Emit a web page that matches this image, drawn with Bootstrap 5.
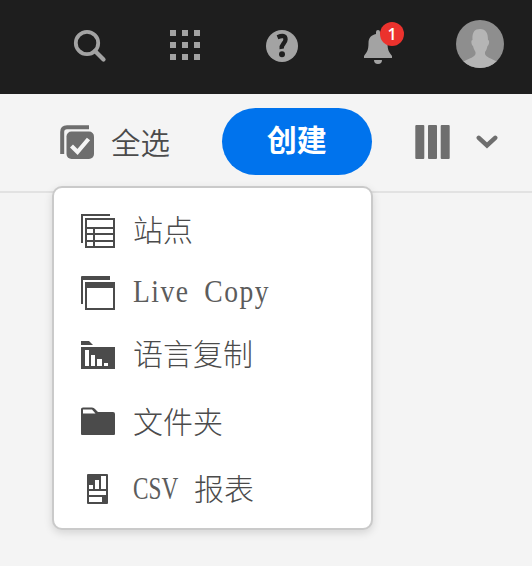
<!DOCTYPE html>
<html lang="zh-CN">
<head>
<meta charset="utf-8">
<meta name="viewport" content="width=device-width, initial-scale=1">
<title>创建</title>
<link href="https://cdn.jsdelivr.net/npm/bootstrap@5.3.0/dist/css/bootstrap.min.css" rel="stylesheet">
<style>
body{background:#f4f4f4;font-family:"Noto Sans CJK SC",sans-serif;height:566px;overflow:hidden;color:#4b4b4b}
svg{display:block;flex:none}
.topbar{height:94px;background:#1e1e1e;padding:0 28px 0 73px}
.icon-search{margin-top:29px}
.icon-apps{margin:30px 0 0 63px}
.icon-help{margin:30px 0 0 66px}
.alerts{margin:29px 0 0 66px}
.avatar{margin-top:20px}
.alert-count{position:absolute;left:16px;top:-7px;width:24px;height:24px;background:#eb322d;font:600 16px/24px "Open Sans",sans-serif}
.toolbar{height:99px;border-bottom:2px solid #e2e2e2;padding:0 34px 2px 60px}
.select-all{font-size:29.5px;line-height:40px;font-weight:350;margin:-2px 0 0 17px;width:110.5px}
.btn-create{width:150.5px;height:67px;background:#0073ed;font-size:30px;line-height:1;font-weight:700;color:#fff;padding:0 0 7px}
.btn-create:hover{background:#0069d9;color:#fff}
.icon-columns{margin-left:43px}
.create-menu{display:block;position:absolute;left:52px;top:186px;width:321px;height:344px;border:2px solid #cacaca;border-radius:10px;padding:12px 0 0;box-shadow:0 3px 9px rgba(0,0,0,.13);background:#fff}
.create-menu .dropdown-item{height:62px;padding:0 0 0 26px;font-size:30px;line-height:44px;color:#4b4b4b;font-weight:300}
.create-menu .tall{height:67.5px}
.create-menu svg{width:36px;height:36px;margin-right:17px}
.create-menu .tall svg{margin-top:3px}
.label-cjk{margin-top:-6px}
.tall .label-cjk{margin-top:0}
.latin{font-family:"Liberation Serif",serif;font-weight:400;font-size:31px;color:#5c5c5c;display:inline-block;transform-origin:0 50%;white-space:pre;margin-top:-2px}
.latin-wide{letter-spacing:1.7px;word-spacing:7px;transform:scaleX(.89)}
.latin-narrow{transform:scaleX(.75);width:61px;margin-top:4px}
</style>
</head>
<body>
<nav class="topbar d-flex align-items-start">
<svg class="icon-search" width="34" height="34" viewBox="0 0 34 34"><g fill="none" stroke="#a3a3a3"><circle cx="14" cy="14" r="11.200" stroke-width="3.800"/><path d="M22 22l8.500 8.500" stroke-width="4.200" stroke-linecap="round"/></g></svg>
<svg class="icon-apps" width="30" height="30" viewBox="0 0 30 30" fill="#a3a3a3"><path d="M0 0h6v6H0zM12 0h6v6h-6zM24 0h6v6h-6zM0 12h6v6H0zM12 12h6v6h-6zM24 12h6v6h-6zM0 24h6v6H0zM12 24h6v6h-6zM24 24h6v6h-6z"/></svg>
<svg class="icon-help" width="32" height="32" viewBox="0 0 32 32"><circle cx="16" cy="16" r="16" fill="#a3a3a3"/><path d="M11.500 7.200Q19.500 4 19.500 9.400c0 4-4.600 4.600-3.800 9.400" fill="none" stroke="#1e1e1e" stroke-width="4.400"/><circle cx="16" cy="24.200" r="3" fill="#1e1e1e"/></svg>
<div class="alerts position-relative">
<svg width="28" height="36" viewBox="0 0 28 36" fill="#a3a3a3"><path d="M12 5V3q0-2 2-2t2 2v2c5 1 7.500 4 7.500 9 0 7 1.500 9 4.500 13v2H0v-2c3-4 4.500-6 4.500-13 0-5 2.500-8 7.500-9zM10 31h8q0 4-4 4t-4-4z"/></svg>
<span class="alert-count rounded-circle text-white text-center">1</span>
</div>
<svg class="avatar ms-auto" width="48" height="48" viewBox="0 0 48 48"><defs><clipPath id="face"><circle cx="24" cy="24" r="24"/></clipPath></defs><g clip-path="url(#face)"><path fill="#8e8e8e" d="M0 0h48v48H0z"/><path fill="#b5b5b5" d="M24 9c-6 0-8 4-7.500 11-2 0-1 6 .5 6 .6 3 2 5 2.500 6v2c-1 3-5 4-13.500 8v8h36v-8c-8-4-12-5-13-8v-2c1-1 1.900-3 2.500-6 1.500 0 2.500-6 .5-6C32 13 30 9 24 9z"/></g></svg>
</nav>
<div class="toolbar d-flex align-items-center">
<svg width="34" height="34" viewBox="0 0 34 34"><path d="M2.200 29V7Q2.200 2.200 7 2.200H29" fill="none" stroke="#6e6e6e" stroke-width="4"/><rect x="6.500" y="6.500" width="27.500" height="27.500" rx="5" fill="#6e6e6e"/><path d="M11.500 21l6 6L28.500 14" fill="none" stroke="#f4f4f4" stroke-width="4.200"/></svg>
<span class="select-all text-nowrap">全选</span>
<button class="btn btn-create rounded-pill border-0" type="button">创建</button>
<svg class="icon-columns" width="36" height="34" viewBox="0 0 36 34" fill="#6e6e6e"><rect x=".3" width="9" height="34" rx="1"/><rect x="13" width="9" height="34" rx="1"/><rect x="25.700" width="9" height="34" rx="1"/></svg>
<svg class="ms-auto" width="22" height="14" viewBox="0 0 22 14"><path d="M2.800 2.800L11 10.500l8.200-7.700" fill="none" stroke="#6e6e6e" stroke-width="4.500" stroke-linecap="round"/></svg>
</div>
<div class="dropdown-menu create-menu">
<a class="dropdown-item d-flex align-items-center" href="#"><svg viewBox="0 0 36 36" fill="none" stroke="#4b4b4b" stroke-width="2"><path d="M2 30V2h28M6 6h28v28H6zM6 15h28M6 21h28M6 28h28M14 15v19"/></svg><span class="label-cjk">站点</span></a>
<a class="dropdown-item d-flex align-items-center" href="#"><svg viewBox="0 0 36 36"><path d="M1 29V2q0-1 1-1h28v4H3v24z" fill="#4b4b4b"/><path d="M6 8h28v26H6z" fill="none" stroke="#4b4b4b" stroke-width="2"/><path d="M5 7h30v6H5z" fill="#4b4b4b"/></svg><span class="latin latin-wide">Live Copy</span></a>
<a class="dropdown-item d-flex align-items-center" href="#"><svg viewBox="0 0 36 36"><path d="M1 4h8l4 4H1zM1 10h34v22H1z" fill="#4b4b4b"/><path d="M5 13h4v16H5zM11 18h4v11h-4zM17 22h5v7h-5zM24 26h4v3h-4z" fill="#fff"/></svg><span class="label-cjk">语言复制</span></a>
<a class="dropdown-item tall d-flex align-items-center" href="#"><svg viewBox="0 0 36 36"><path d="M1 31V6q0-1.500 2-1.500h9q2 0 3 1.500l3 3h15q2 0 2 2v20q0 1-1 1H2q-1 0-1-1z" fill="#4b4b4b"/><path d="M3 6.500h9l3.500 4H3z" fill="#fff"/></svg><span class="label-cjk">文件夹</span></a>
<a class="dropdown-item tall d-flex align-items-center" href="#"><svg viewBox="0 0 36 36"><rect x="7" y="3" width="21" height="30" rx="1" fill="#4b4b4b"/><path d="M9 14h4v4H9zM15 9h4v9h-4zM21 5h5v13h-5zM9 20h17v4H9zM9 26h13v5H9z" fill="#fff"/></svg><span class="latin latin-narrow">CSV</span><span class="label-cjk">报表</span></a>
</div>
<script src="https://cdn.jsdelivr.net/npm/bootstrap@5.3.0/dist/js/bootstrap.bundle.min.js"></script>
</body>
</html>
